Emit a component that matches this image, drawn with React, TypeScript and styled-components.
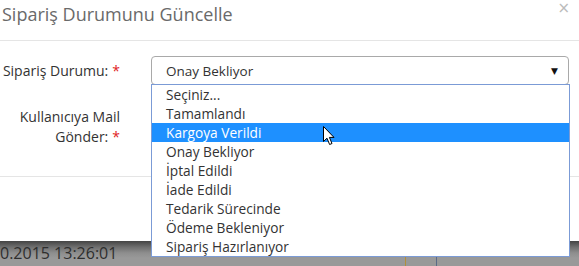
import React from 'react';
import styled, { createGlobalStyle } from 'styled-components';

const GlobalStyle = createGlobalStyle`
  html, body {
    margin: 0;
    padding: 0;
    background: #999999;
    font-family: "Open Sans", "DejaVu Sans", sans-serif;
    -webkit-font-smoothing: antialiased;
  }
`;

const Page = styled.div`
  width: 579px;
  height: 266px;
  overflow: hidden;
  position: relative;
  background: #999999;
`;

const Modal = styled.div`
  background: #ffffff;
  height: 241px;
  display: flex;
  flex-direction: column;
`;

const Header = styled.div`
  height: 40px;
  border-bottom: 1px solid #e5e5e5;
  display: flex;
  justify-content: space-between;
  align-items: flex-start;
  padding: 0 9px 0 2px;
  box-sizing: content-box;
`;

const Title = styled.h4`
  margin: 2px 0 0;
  font-size: 18px;
  font-weight: 400;
  line-height: 24px;
  color: #6a6a6a;
`;

const Close = styled.span`
  margin-top: 0;
  font-size: 15px;
  line-height: 16px;
  color: #bbbbbb;
  font-family: "DejaVu Sans", sans-serif;
`;

const Body = styled.div`
  padding-top: 15px;
  height: 120px;
  border-bottom: 1px solid #e5e5e5;
  display: flex;
  flex-direction: column;
  gap: 22px;
`;

const FormRow = styled.div<{ $top?: boolean }>`
  display: flex;
  align-items: ${({ $top }) => ($top ? 'flex-start' : 'center')};
`;

const Label = styled.label`
  width: 120px;
  text-align: right;
  font-size: 14px;
  line-height: 20px;
  color: #333333;
  flex-shrink: 0;
`;

const Star = styled.span`
  color: #e02222;
  margin-left: 4px;
`;

const Field = styled.div`
  position: relative;
  margin-left: 31px;
  width: 418px;
`;

const SelectBox = styled.div`
  height: 27px;
  border: 1px solid #a9a9a9;
  border-radius: 4px;
  display: flex;
  align-items: center;
  justify-content: space-between;
  padding: 0 10px 0 14px;
  font-size: 13.5px;
  color: #333333;
`;

const Arrow = styled.span`
  font-size: 9px;
  color: #111;
  font-family: "DejaVu Sans", sans-serif;
`;

const Dropdown = styled.ul`
  position: absolute;
  left: 0;
  top: 28px;
  width: 417px;
  margin: 0;
  padding: 0;
  list-style: none;
  background: #ffffff;
  border: 1px solid #7b9bd6;
  z-index: 10;
`;

const Option = styled.li<{ $active?: boolean }>`
  height: 19px;
  line-height: 19px;
  padding-left: 14px;
  font-size: 13.7px;
  color: ${({ $active }) => ($active ? '#ffffff' : '#333333')};
  background: ${({ $active }) => ($active ? '#1e90ff' : 'transparent')};
  position: relative;
`;

const Cursor = styled.svg`
  position: absolute;
  left: 171px;
  top: 3px;
`;

const Backdrop = styled.div`
  height: 25px;
  background: linear-gradient(#444444 0px, #6e6e6e 6px, #8e8e8e 12px, #999999 17px);
  display: flex;
`;

const Cell = styled.div<{ $w?: number; $line?: string }>`
  width: ${({ $w }) => ($w ? `${$w}px` : 'auto')};
  flex: ${({ $w }) => ($w ? 'none' : '1')};
  font-size: 16px;
  line-height: 25px;
  color: #2e2e2e;
  padding-left: 0;
  box-sizing: border-box;
  position: relative;
  &::before {
    content: '';
    display: ${({ $line }) => ($line ? 'block' : 'none')};
    position: absolute;
    left: 0;
    top: 16px;
    bottom: 0;
    width: 1px;
    background: ${({ $line }) => $line};
  }
`;

const options = [
  'Seçiniz...',
  'Tamamlandı',
  'Kargoya Verildi',
  'Onay Bekliyor',
  'İptal Edildi',
  'İade Edildi',
  'Tedarik Sürecinde',
  'Ödeme Bekleniyor',
  'Sipariş Hazırlanıyor',
];

const App: React.FC = () => {
  return (
    <Page>
      <GlobalStyle />
      <Modal>
        <Header>
          <Title>Sipariş Durumunu Güncelle</Title>
          <Close>×</Close>
        </Header>
        <Body>
          <FormRow>
            <Label>
              Sipariş Durumu:<Star>*</Star>
            </Label>
            <Field>
              <SelectBox>
                Onay Bekliyor
                <Arrow>▼</Arrow>
              </SelectBox>
              <Dropdown>
                {options.map((o) => (
                  <Option key={o} $active={o === 'Kargoya Verildi'}>
                    {o}
                    {o === 'Kargoya Verildi' && (
                      <Cursor width="13" height="20" viewBox="0 0 13 20">
                        <path
                          d="M0.5 0.5 L0.5 15.5 L4 12.2 L6.6 18.5 L9 17.5 L6.4 11.4 L11 11.4 Z"
                          fill="#ffffff"
                          stroke="#000000"
                          strokeWidth="1"
                        />
                      </Cursor>
                    )}
                  </Option>
                ))}
              </Dropdown>
            </Field>
          </FormRow>
          <FormRow $top>
            <Label>
              Kullanıcıya Mail
              <br />
              Gönder:<Star>*</Star>
            </Label>
          </FormRow>
        </Body>
      </Modal>
      <Backdrop>
        <Cell $w={405}>0.2015 13:26:01</Cell>
        <Cell $w={31} $line="#b38f3a" />
        <Cell $line="#5b6a86" />
      </Backdrop>
    </Page>
  );
};

export default App;
